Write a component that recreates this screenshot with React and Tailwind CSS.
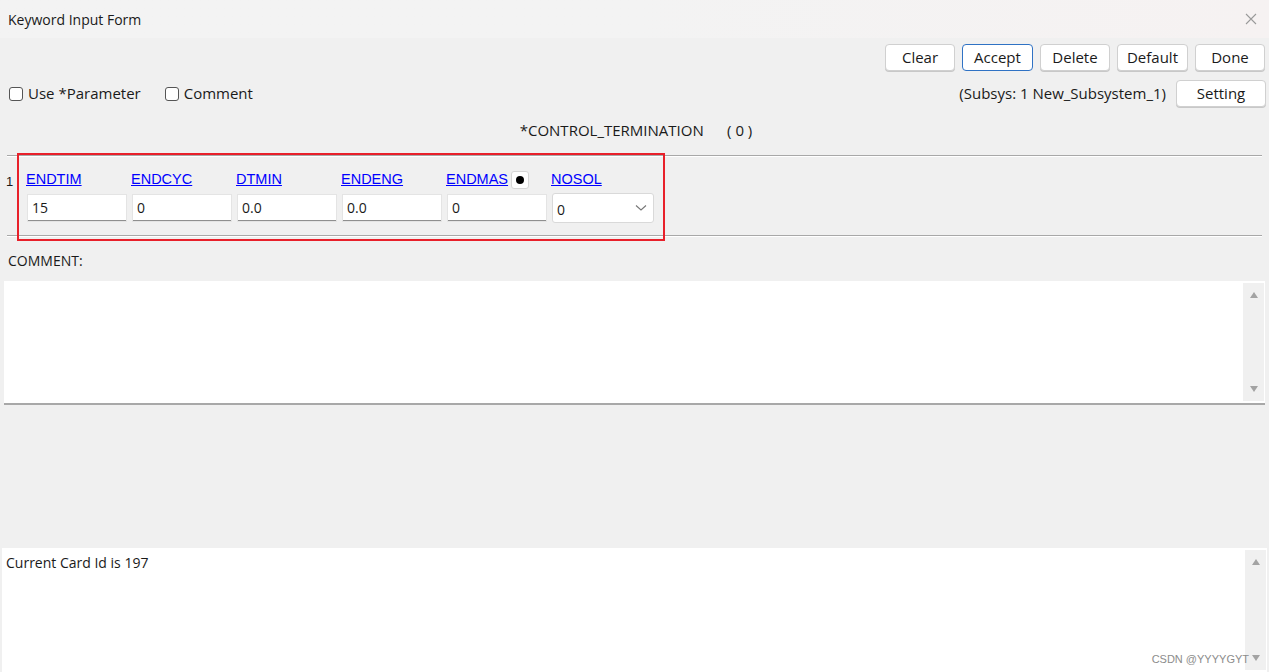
import React from 'react';

const font = { fontFamily: '"Open Sans", "Noto Sans", sans-serif' };
const arial = { fontFamily: '"Liberation Sans", Arial, sans-serif' };

const fields = [
  { label: 'ENDTIM', value: '15' },
  { label: 'ENDCYC', value: '0' },
  { label: 'DTMIN', value: '0.0' },
  { label: 'ENDENG', value: '0.0' },
  { label: 'ENDMAS', value: '0', dot: true },
];

function Btn({ children, active, className = '' }) {
  return (
    <button
      className={`h-[27px] rounded-[4px] bg-white text-[15px] text-[#1a1a1a] ${
        active ? 'border border-[#2f72c4]' : 'border border-[#d0d0d0] shadow-[0_1px_0_#c8c8c8]'
      } ${className}`}
    >
      {children}
    </button>
  );
}

function Check({ label }) {
  return (
    <label className="flex items-center gap-[5px] text-[15px] text-[#1a1a1a]">
      <span className="w-[14px] h-[14px] rounded-[3px] border border-[#555] bg-white" />
      {label}
    </label>
  );
}

function ScrollBar() {
  return (
    <div className="w-[21px] bg-[#f0f0f0] flex flex-col justify-between items-center py-[8px] my-[2px]">
      <svg width="10" height="8" viewBox="0 0 10 8"><path d="M5 1 L9 7 L1 7 Z" fill="#a3a3a3" /></svg>
      <svg width="10" height="8" viewBox="0 0 10 8"><path d="M1 1 L9 1 L5 7 Z" fill="#a3a3a3" /></svg>
    </div>
  );
}

export default function App() {
  return (
    <div className="w-[1269px] h-[672px] bg-[#f0f0f0] flex flex-col overflow-hidden" style={font}>
      <div className="h-[38px] bg-gradient-to-r from-[#f3f3f3] via-[#f3f3f3] to-[#f6f2f2] flex items-center justify-between pl-[8px] pr-[12px]">
        <span className="text-[14px] text-[#1a1a1a]">Keyword Input Form</span>
        <svg width="12" height="12" viewBox="0 0 12 12">
          <path d="M1 1 L11 11 M11 1 L1 11" stroke="#9a9a9a" strokeWidth="1.1" />
        </svg>
      </div>

      <div className="flex justify-end gap-[7px] pr-[4px] mt-[6px]">
        <Btn className="w-[70px]">Clear</Btn>
        <Btn className="w-[71px]" active>Accept</Btn>
        <Btn className="w-[70px]">Delete</Btn>
        <Btn className="w-[71px]">Default</Btn>
        <Btn className="w-[70px]">Done</Btn>
      </div>

      <div className="flex items-center justify-between pl-[9px] pr-[3px] mt-[9px]">
        <div className="flex items-center gap-[24px]">
          <Check label="Use *Parameter" />
          <Check label="Comment" />
        </div>
        <div className="flex items-center gap-[10px]">
          <span className="text-[15px] text-[#1a1a1a]">(Subsys: 1 New_Subsystem_1)</span>
          <Btn className="w-[90px]">Setting</Btn>
        </div>
      </div>

      <div className="text-center text-[15px] text-[#1a1a1a] mt-[12px] pl-[3px]">
        *CONTROL_TERMINATION&nbsp;&nbsp;&nbsp;&nbsp;&nbsp;&nbsp;( 0 )
      </div>

      <div className="mx-[7px] mt-[13px] border-t border-[#a8a8a8] shadow-[0_1px_0_#ffffff]" />

      <div className="relative flex h-[79px] pl-[6px]">
        <span className="text-[13px] text-[#1a1a1a] mt-[16px] w-[20px]" style={arial}>1</span>
        <div className="flex gap-[5px] mt-[14px]">
          {fields.map((f) => (
            <div key={f.label} className="w-[100px] flex flex-col">
              <div className="flex items-center gap-[3px] h-[20px]">
                <span className="text-[14.5px] text-[#0000ff] underline" style={arial}>{f.label}</span>
                {f.dot && (
                  <span className="w-[18px] h-[18px] rounded-[3px] bg-white border border-[#d6d6d6] flex items-center justify-center">
                    <span className="w-[8px] h-[8px] rounded-full bg-black" />
                  </span>
                )}
              </div>
              <div className="ml-[2px] mt-[5px] h-[26px] bg-white border-b border-[#8f8f8f] shadow-[0_0_0_1px_#e4e4e4] flex items-center pl-[4px] text-[14px] text-[#1a1a1a]">
                {f.value}
              </div>
            </div>
          ))}
          <div className="w-[103px] flex flex-col">
            <div className="h-[20px] flex items-center">
              <span className="text-[14.5px] text-[#0000ff] underline" style={arial}>NOSOL</span>
            </div>
            <div className="mt-[3px] ml-[1px] h-[30px] bg-white border border-[#d9d9d9] rounded-[3px] flex items-center justify-between pl-[4px] pr-[6px] text-[14px] text-[#1a1a1a]">
              <span className="mt-[3px]">0</span>
              <svg width="12" height="8" viewBox="0 0 12 8"><path d="M1 1.5 L6 6 L11 1.5" stroke="#777" fill="none" strokeWidth="1.1" /></svg>
            </div>
          </div>
        </div>
        <div className="absolute left-[17px] top-[-3px] w-[648px] h-[88px] border-2 border-[#e8202a] pointer-events-none" />
      </div>

      <div className="mx-[7px] border-t border-[#a8a8a8] shadow-[0_1px_0_#ffffff]" />

      <div className="pl-[8px] mt-[14px] text-[14px] text-[#1a1a1a]">COMMENT:</div>

      <div className="mx-[4px] mt-[10px] h-[124px] bg-white border-b-2 border-[#a8a8a8] flex justify-end pr-[1px]">
        <ScrollBar />
      </div>

      <div className="flex-1" />

      <div className="relative ml-[2px] mr-[2px] h-[124px] bg-white flex justify-between pr-[1px]">
        <span className="text-[14px] text-[#1a1a1a] pl-[4px] pt-[4px]">Current Card Id is 197</span>
        <ScrollBar />
        <span className="absolute right-[18px] bottom-[5px] text-[11px] text-[#8c8c8c]" style={arial}>CSDN @YYYYGYT</span>
      </div>
    </div>
  );
}
